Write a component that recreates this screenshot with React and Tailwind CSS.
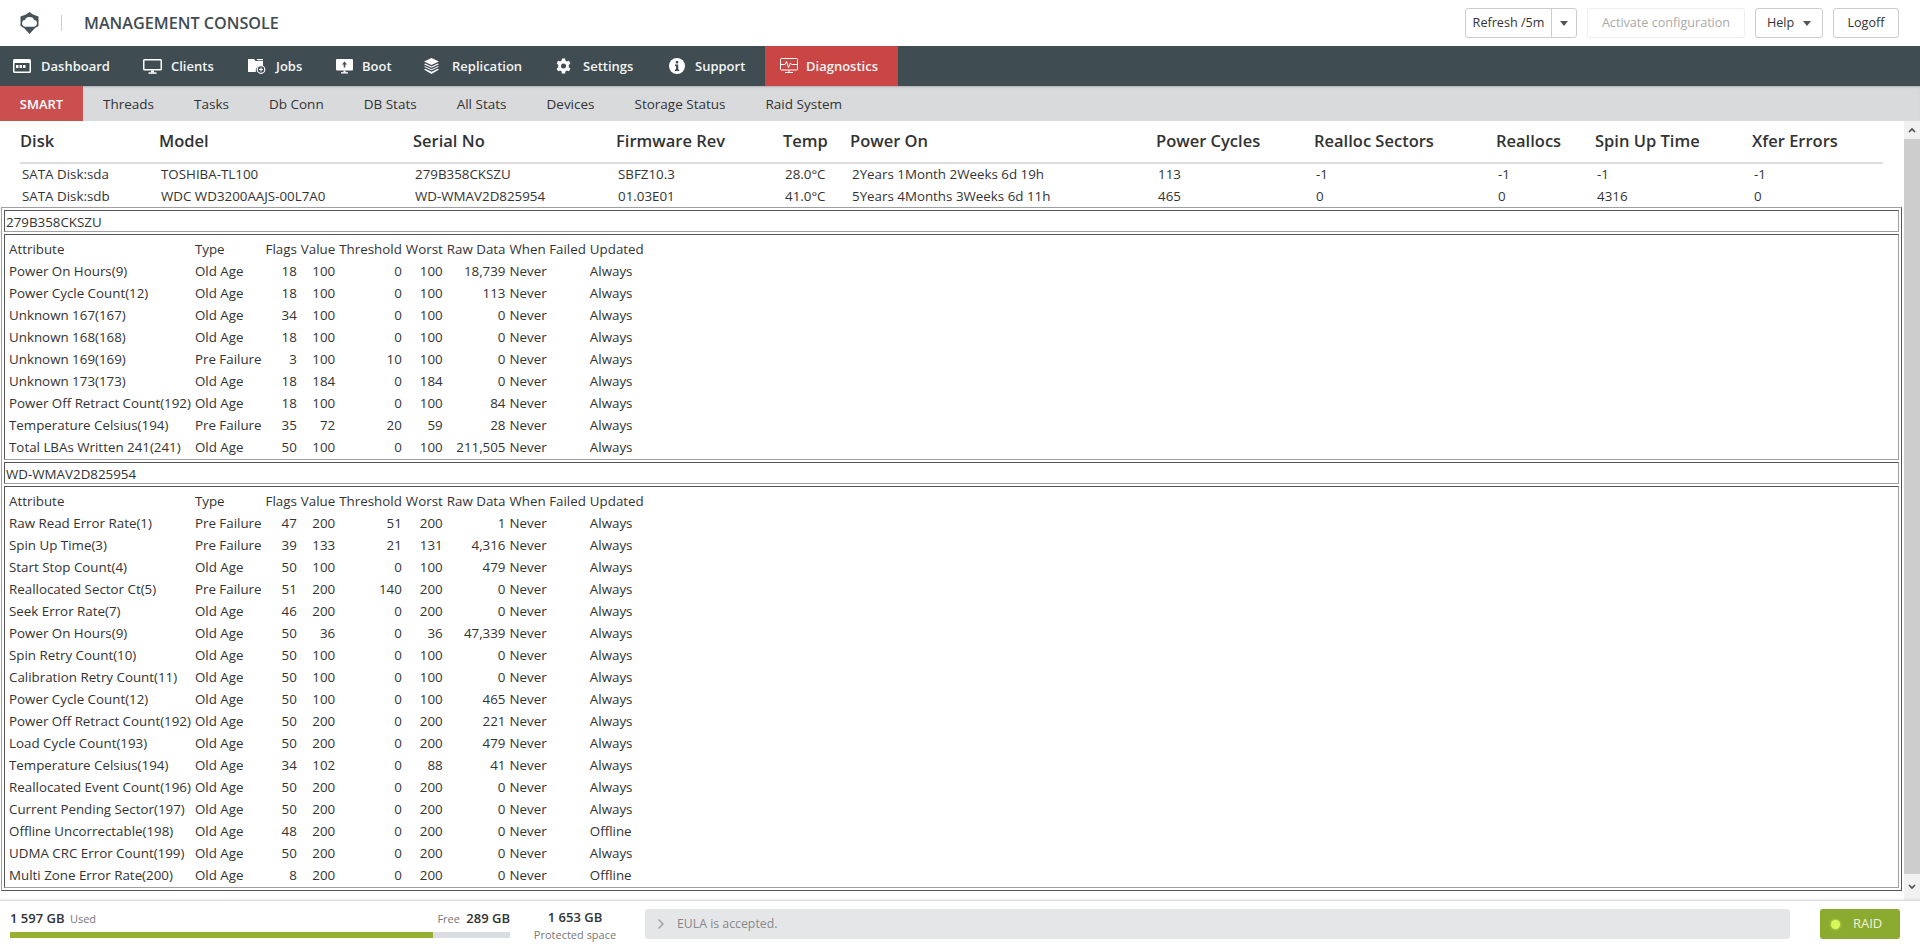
import React from "react";

const I = {
  dash: (
    <svg width="18" height="15" viewBox="0 0 18 15"><rect x="0" y="0" width="18" height="14" rx="1.5" fill="#fff" /><rect x="1.5" y="4" width="15" height="8.5" fill="#3f4c52" /><rect x="3" y="6" width="2.5" height="3" fill="#fff" /><rect x="6.5" y="6" width="2.5" height="3" fill="#fff" /><rect x="10" y="6" width="2.5" height="3" fill="#fff" /></svg>
  ),
  clients: (
    <svg width="19" height="15" viewBox="0 0 19 15"><path d="M1.5 0h16A1.5 1.5 0 0 1 19 1.5V10a1.5 1.5 0 0 1-1.5 1.5h-16A1.5 1.5 0 0 1 0 10V1.5A1.5 1.5 0 0 1 1.5 0zM1.5 1.5V10h16V1.5z" fill="#fff" fillRule="evenodd" /><rect x="8" y="11.5" width="3" height="2" fill="#fff" /><rect x="5.5" y="13.3" width="8" height="1.5" fill="#fff" /></svg>
  ),
  jobs: (
    <svg width="18" height="16" viewBox="0 0 18 16"><path d="M0 1h6l1.5 2H15v5a5 5 0 0 0-7 6H0z" fill="#fff" /><path d="M8.5 1H15v1.2H9.5z" fill="#fff" /><circle cx="13" cy="11.5" r="3.8" fill="none" stroke="#fff" strokeWidth="1.2" /><path d="M13 9.5v4M11 11.5h4" stroke="#fff" strokeWidth="1.1" /></svg>
  ),
  boot: (
    <svg width="17" height="15" viewBox="0 0 17 15"><rect width="17" height="11.5" rx="1" fill="#fff" /><path d="M8.5 2.5 11 5.5H9.3V8.5H7.7V5.5H6z" fill="#3f4c52" /><rect x="7.5" y="11.5" width="2" height="2" fill="#fff" /><rect x="5" y="13.2" width="7" height="1.3" fill="#fff" /></svg>
  ),
  repl: (
    <svg width="15" height="16" viewBox="0 0 15 16" fill="#fff"><path d="M7.5 0 15 3.5 7.5 7 0 3.5z" /><path d="M1.2 5.6 7.5 8.6l6.3-3 1.2.6-7.5 3.5L0 6.2z" /><path d="M1.2 8.2 7.5 11.2l6.3-3 1.2.6-7.5 3.5L0 8.8z" /><path d="M1.2 10.8 7.5 13.8l6.3-3 1.2.6L7.5 16 0 11.4z" /></svg>
  ),
  gear: (
    <svg width="15" height="16" viewBox="0 0 24 24" fill="#fff"><path fillRule="evenodd" d="M14.5 0h-5l-.7 3.6c-.7.3-1.3.6-1.9 1.1L3.400 3.500.9 7.800l2.800 2.400a8 8 0 0 0 0 3.600L.9 16.200l2.500 4.300 3.500-1.200c.6.500 1.200.8 1.900 1.100l.7 3.600h5l.7-3.600c.7-.3 1.300-.6 1.900-1.100l3.500 1.200 2.500-4.300-2.800-2.400a8 8 0 0 0 0-3.600l2.800-2.400-2.500-4.300-3.500 1.200c-.6-.5-1.200-.8-1.900-1.100zM12 8a4 4 0 1 1 0 8 4 4 0 0 1 0-8z" /></svg>
  ),
  info: (
    <svg width="16" height="16" viewBox="0 0 16 16"><circle cx="8" cy="8" r="8" fill="#fff" /><rect x="6.800" y="3" width="2.400" height="2.400" fill="#3f4c52" /><path d="M6 6.500h3.200V11.500h1V13H6v-1.500h1V8H6z" fill="#3f4c52" /></svg>
  ),
  diag: (
    <svg width="18" height="16" viewBox="0 0 18 16" fill="none" stroke="#fff" strokeWidth="1"><rect x="0.500" y="0.500" width="17" height="11.500" rx="1" /><path d="M1 6.500h4l1.500-3 2 6 2-4.500 1 1.500H17" /><path d="M9 12v2M5 14.500h8" /></svg>
  ),
  caret: (
    <svg width="8" height="5" viewBox="0 0 8 5"><path d="M0 0h8L4 5z" fill="#555" /></svg>
  ),
};

const nav = [
  ["Dashboard", I.dash, "w-[128px] pl-[13px] gap-[10px]"],
  ["Clients", I.clients, "w-[105px] pl-[15px] gap-[9px]"],
  ["Jobs", I.jobs, "w-[88px] pl-[15px] gap-[10px]"],
  ["Boot", I.boot, "w-[88px] pl-[15px] gap-[9px]"],
  ["Replication", I.repl, "w-[132px] pl-[15px] gap-[13px]"],
  ["Settings", I.gear, "w-[113px] pl-[15px] gap-[12px]"],
  ["Support", I.info, "w-[111px] pl-[15px] gap-[10px]"],
  ["Diagnostics", I.diag, "w-[133px] pl-[15px] gap-[8px] bg-[#ca4645]"],
];
const sub = ["Threads", "Tasks", "Db Conn", "DB Stats", "All Stats", "Devices", "Storage Status", "Raid System"];

const diskHead = ["Disk", "Model", "Serial No", "Firmware Rev", "Temp", "Power On", "Power Cycles", "Realloc Sectors", "Reallocs", "Spin Up Time", "Xfer Errors"];
const disks = [
  ["SATA Disk:sda", "TOSHIBA-TL100", "279B358CKSZU", "SBFZ10.3", "28.0°C", "2Years 1Month 2Weeks 6d 19h", "113", "-1", "-1", "-1", "-1"],
  ["SATA Disk:sdb", "WDC WD3200AAJS-00L7A0", "WD-WMAV2D825954", "01.03E01", "41.0°C", "5Years 4Months 3Weeks 6d 11h", "465", "0", "0", "4316", "0"],
];
const widths = ["w-[139px]", "w-[254px]", "w-[203px]", "w-[167px]", "w-[67px]", "w-[306px]", "w-[158px]", "w-[182px]", "w-[99px]", "w-[157px]", "w-[131px]"];

const a = [
  ["Power On Hours(9)", "Old Age", 18, 100, 0, 100, "18,739", "Always"],
  ["Power Cycle Count(12)", "Old Age", 18, 100, 0, 100, "113", "Always"],
  ["Unknown 167(167)", "Old Age", 34, 100, 0, 100, "0", "Always"],
  ["Unknown 168(168)", "Old Age", 18, 100, 0, 100, "0", "Always"],
  ["Unknown 169(169)", "Pre Failure", 3, 100, 10, 100, "0", "Always"],
  ["Unknown 173(173)", "Old Age", 18, 184, 0, 184, "0", "Always"],
  ["Power Off Retract Count(192)", "Old Age", 18, 100, 0, 100, "84", "Always"],
  ["Temperature Celsius(194)", "Pre Failure", 35, 72, 20, 59, "28", "Always"],
  ["Total LBAs Written 241(241)", "Old Age", 50, 100, 0, 100, "211,505", "Always"],
];
const b = [
  ["Raw Read Error Rate(1)", "Pre Failure", 47, 200, 51, 200, "1", "Always"],
  ["Spin Up Time(3)", "Pre Failure", 39, 133, 21, 131, "4,316", "Always"],
  ["Start Stop Count(4)", "Old Age", 50, 100, 0, 100, "479", "Always"],
  ["Reallocated Sector Ct(5)", "Pre Failure", 51, 200, 140, 200, "0", "Always"],
  ["Seek Error Rate(7)", "Old Age", 46, 200, 0, 200, "0", "Always"],
  ["Power On Hours(9)", "Old Age", 50, 36, 0, 36, "47,339", "Always"],
  ["Spin Retry Count(10)", "Old Age", 50, 100, 0, 100, "0", "Always"],
  ["Calibration Retry Count(11)", "Old Age", 50, 100, 0, 100, "0", "Always"],
  ["Power Cycle Count(12)", "Old Age", 50, 100, 0, 100, "465", "Always"],
  ["Power Off Retract Count(192)", "Old Age", 50, 200, 0, 200, "221", "Always"],
  ["Load Cycle Count(193)", "Old Age", 50, 200, 0, 200, "479", "Always"],
  ["Temperature Celsius(194)", "Old Age", 34, 102, 0, 88, "41", "Always"],
  ["Reallocated Event Count(196)", "Old Age", 50, 200, 0, 200, "0", "Always"],
  ["Current Pending Sector(197)", "Old Age", 50, 200, 0, 200, "0", "Always"],
  ["Offline Uncorrectable(198)", "Old Age", 48, 200, 0, 200, "0", "Offline"],
  ["UDMA CRC Error Count(199)", "Old Age", 50, 200, 0, 200, "0", "Always"],
  ["Multi Zone Error Rate(200)", "Old Age", 8, 200, 0, 200, "0", "Offline"],
];

const cellB = "border border-t-[#555] border-l-[#555] border-r-[#a0a0a0] border-b-[#a0a0a0]";
const td = "px-px pt-[2px] pb-0";

function Attrs({ rows }) {
  const heads = ["Attribute", "Type", "Flags", "Value", "Threshold", "Worst", "Raw Data", "When Failed", "Updated"];
  return (
    <table className="border-separate border-spacing-[2px]">
      <tbody>
        <tr className="leading-[18px]">
          {heads.map((h) => (
            <td key={h} className={`${td} whitespace-nowrap`}>{h}</td>
          ))}
        </tr>
        {rows.map((r, i) => (
          <tr key={i} className="leading-[18px]">
            <td className={`${td} whitespace-nowrap`}>{r[0]}</td>
            <td className={`${td} whitespace-nowrap`}>{r[1]}</td>
            <td className={`${td} text-right`}>{r[2]}</td>
            <td className={`${td} text-right`}>{r[3]}</td>
            <td className={`${td} text-right`}>{r[4]}</td>
            <td className={`${td} text-right`}>{r[5]}</td>
            <td className={`${td} text-right`}>{r[6]}</td>
            <td className={td}>Never</td>
            <td className={td}>{r[7]}</td>
          </tr>
        ))}
      </tbody>
    </table>
  );
}

export default function App() {
  return (
    <div className="h-[946px] w-[1920px] overflow-hidden bg-white flex flex-col text-[13.35px] text-[#333] font-['Open_Sans',sans-serif]">
      {/* top */}
      <header className="h-[46px] flex items-center justify-between shrink-0">
        <div className="flex items-center">
          <svg className="ml-[20px]" width="19" height="22" viewBox="0 0 19 22">
            <path d="M9.500 0 13 2.500 18.500 4.500V14L15 16 9.500 22 4 16 .5 14V4.500L6 2.500z" fill="#46535a" />
            <path d="M9.500 5C12 5 13.500 6.300 14 8 16 8.200 17 9.700 17 11.300 17 13 15.600 14.800 13.500 14.800H5.500C3.400 14.800 2 13 2 11.300 2 9.700 3 8.200 5 8 5.500 6.300 7 5 9.500 5z" fill="#fff" />
          </svg>
          <div className="ml-[22px] h-[16px] w-px bg-[#ccc]" />
          <div className="ml-[22px] text-[16.2px] font-semibold text-[#3f4c52] leading-none">MANAGEMENT CONSOLE</div>
        </div>
        <div className="flex items-center gap-[10px] pr-[21px] text-[12.6px] text-[#333]">
          <div className="flex h-[30px] w-[112px] rounded-[3px] border border-[#ccc]">
            <div className="w-[86px] flex items-center justify-center border-r border-[#ccc]">Refresh /5m</div>
            <div className="flex-1 flex items-center justify-center">{I.caret}</div>
          </div>
          <div className="h-[30px] w-[158px] rounded-[3px] border border-[#eee] flex items-center justify-center text-[#aaa]">Activate configuration</div>
          <div className="h-[30px] w-[68px] rounded-[3px] border border-[#ccc] flex items-center justify-center gap-[9px]">Help {I.caret}</div>
          <div className="h-[30px] w-[66px] rounded-[3px] border border-[#ccc] flex items-center justify-center">Logoff</div>
        </div>
      </header>

      {/* nav */}
      <nav className="h-[40px] bg-[#3f4c52] flex items-stretch shrink-0 text-[13px] font-semibold text-[#f2f4f4]">
        {nav.map(([t, ic, p]) => (
          <div key={t} className={`flex items-center shrink-0 ${p}`}>
            <span className="flex">{ic}</span>
            <span className="pt-[2px]">{t}</span>
          </div>
        ))}
      </nav>

      {/* subnav */}
      <div className="h-[35px] bg-[#d9dadc] flex items-stretch shrink-0 text-[13.5px] shadow-[inset_0_2px_2px_-1px_rgba(0,0,0,0.2)]">
        <div className="w-[83px] pt-[2px] bg-[#ca4f4e] text-white font-semibold text-[13px] flex items-center justify-center">SMART</div>
        {sub.map((s) => (
          <div key={s} className="flex items-center px-[20px] pt-[2px]">{s}</div>
        ))}
      </div>

      {/* content */}
      <div className="flex-1 min-h-0 flex">
        <main className="flex-1 min-w-0 overflow-hidden">
          <div className="pl-[20px] pr-[21px]">
            <table className="w-[1863px] table-fixed">
              <colgroup>
                {widths.map((w, i) => (
                  <col key={i} className={w} />
                ))}
              </colgroup>
              <thead>
                <tr>
                  {diskHead.map((h) => (
                    <th key={h} className="h-[42px] text-left text-[16.5px] font-semibold border-b-2 border-[#ddd] pb-[1px]">{h}</th>
                  ))}
                </tr>
              </thead>
              <tbody>
                {disks.map((r, i) => (
                  <tr key={i} className="h-[22px]">
                    {r.map((c, j) => (
                      <td key={j} className="pl-[2px] whitespace-nowrap">{c}</td>
                    ))}
                  </tr>
                ))}
              </tbody>
            </table>
          </div>
          <table className="ml-px w-[1901px] border-separate border-spacing-[2px] border border-t-[#a0a0a0] border-l-[#a0a0a0] border-r-[#555] border-b-[#555]">
            <tbody>
              <tr><td className={`${cellB} ${td} leading-[18px]`}>279B358CKSZU</td></tr>
              <tr><td className={`${cellB} p-px`}><Attrs rows={a} /></td></tr>
              <tr><td className={`${cellB} ${td} leading-[18px]`}>WD-WMAV2D825954</td></tr>
              <tr><td className={`${cellB} p-px`}><Attrs rows={b} /></td></tr>
            </tbody>
          </table>
        </main>
        <div className="w-[16px] flex flex-col bg-[#f1f1f1] shrink-0">
          <div className="h-[18px] flex items-center justify-center">
            <svg width="8" height="6" viewBox="0 0 8 6"><path d="M1 5 4 2l3 3" fill="none" stroke="#505050" strokeWidth="1.600" /></svg>
          </div>
          <div className="flex-1 bg-[#cdcdcd]" />
          <div className="h-[26px] flex items-center justify-center">
            <svg width="8" height="6" viewBox="0 0 8 6"><path d="M1 1l3 3 3-3" fill="none" stroke="#505050" strokeWidth="1.600" /></svg>
          </div>
        </div>
      </div>

      {/* footer */}
      <footer className="h-[46px] shrink-0 flex border-t border-[#ddd] shadow-[0_-1px_2px_rgba(0,0,0,0.08)] relative bg-white text-[13px]">
        <div className="w-[500px] ml-[10px] pt-[8px]">
          <div className="flex justify-between items-baseline leading-[18px]">
            <div><span className="font-semibold">1 597 GB</span> <span className="text-[11px] text-[#777] ml-[2px]">Used</span></div>
            <div><span className="text-[11px] text-[#777] mr-[3px]">Free</span> <span className="font-semibold">289 GB</span></div>
          </div>
          <div className="mt-[4px] h-[6px] bg-[#d9dde2]">
            <div className="h-full w-[423px] bg-[#97b032]" />
          </div>
        </div>
        <div className="w-[102px] ml-[14px] pt-[7px] text-center">
          <div className="font-semibold leading-[18px]">1 653 GB</div>
          <div className="text-[11px] text-[#777] leading-[16px] mt-[1px]">Protected space</div>
        </div>
        <div className="ml-[19px] mt-[8px] h-[30px] w-[1145px] rounded-[3px] bg-[#e5e6e8] flex items-center pl-[12px] text-[#888] text-[12.3px]">
          <svg width="8" height="12" viewBox="0 0 8 12"><path d="M1.500 1.500 6 6l-4.500 4.500" fill="none" stroke="#999" strokeWidth="1.300" /></svg>
          <span className="ml-[12px]">EULA is accepted.</span>
        </div>
        <div className="ml-[30px] mt-[8px] h-[30px] w-[80px] rounded-[3px] bg-[#8aab2f] flex items-center pl-[11px] text-[#eef5d8] font-medium">
          <span className="w-[9px] h-[9px] rounded-full bg-[#d8f75a] shadow-[0_0_3px_#d8f75a]" />
          <span className="ml-[13px]">RAID</span>
        </div>
      </footer>
    </div>
  );
}
